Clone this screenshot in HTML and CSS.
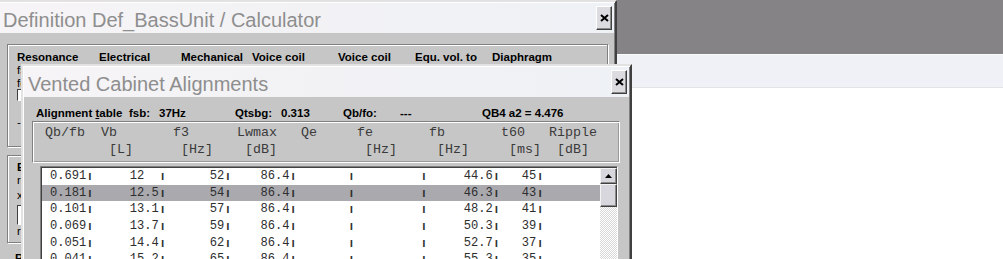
FILE: index.html
```html
<!DOCTYPE html>
<html lang="en">
<head>
  <meta charset="UTF-8">
  <meta name="viewport" content="width=device-width, initial-scale=1.0">
  <title>Vented Cabinet Alignments</title>
  <link rel="stylesheet" href="styles.css">
</head>
<body>
  <!-- whatever lies behind the dialogs -->
  <div class="desktop-bar"></div>
  <div class="other-title"></div>

  <div class="window calc-window">
    <div class="titlebar">
      <span class="title">Definition Def_BassUnit / Calculator</span>
      <button class="close-btn"><svg width="9" height="8" viewBox="0 0 9 8"><path d="M1 1L8 7M8 1L1 7" stroke="#000" stroke-width="2"/></svg></button>
    </div>
    <div class="calc-body">
      <div class="group params">
        <div class="tabs">
          <span>Resonance</span><span>Electrical</span><span>Mechanical</span><span>Voice coil</span><span>Voice coil</span><span>Equ. vol. to</span><span>Diaphragm</span>
        </div>
        <div class="lbl">fs [Hz]</div>
        <div class="lbl lbl-tight">fc [Hz]</div>
        <div class="edit"></div>
        <div class="lbl dash">-</div>
      </div>
      <div class="group extras">
        <div class="lbl strong">Extra</div>
        <div class="lbl">re [Ohm]</div>
        <div class="lbl lbl-gap">xmax [mm]</div>
        <div class="edit tall"></div>
        <div class="lbl">rms</div>
      </div>
      <div class="section-title">Result</div>
    </div>
  </div>

  <div class="window align-window">
    <div class="titlebar">
      <span class="title">Vented Cabinet Alignments</span>
      <button class="close-btn"><svg width="9" height="8" viewBox="0 0 9 8"><path d="M1 1L8 7M8 1L1 7" stroke="#000" stroke-width="2"/></svg></button>
    </div>
    <div class="align-body">
      <div class="info">
        <span>Alignment <u>t</u>able</span><span>fsb:</span><span>37Hz</span><span>Qtsbg:</span><span>0.313</span><span>Qb/fo:</span><span>---</span><span>QB4 a2 = 4.476</span>
      </div>
      <pre class="head">Qb/fb  Vb       f3      Lwmax   Qe     fe       fb       t60   Ripple
        [L]      [Hz]    [dB]           [Hz]     [Hz]     [ms]  [dB]</pre>
      <div class="list">
        <div class="rows">
          <div class="row">0.691<i>|</i>     12  <i>|</i>      52<i>|</i>    86.4<i>|</i>       <i>|</i>         <i>|</i>     44.6<i>|</i>   45<i>|</i></div>
          <div class="row selected">0.181<i>|</i>     12.5<i>|</i>      54<i>|</i>    86.4<i>|</i>       <i>|</i>         <i>|</i>     46.3<i>|</i>   43<i>|</i></div>
          <div class="row">0.101<i>|</i>     13.1<i>|</i>      57<i>|</i>    86.4<i>|</i>       <i>|</i>         <i>|</i>     48.2<i>|</i>   41<i>|</i></div>
          <div class="row">0.069<i>|</i>     13.7<i>|</i>      59<i>|</i>    86.4<i>|</i>       <i>|</i>         <i>|</i>     50.3<i>|</i>   39<i>|</i></div>
          <div class="row">0.051<i>|</i>     14.4<i>|</i>      62<i>|</i>    86.4<i>|</i>       <i>|</i>         <i>|</i>     52.7<i>|</i>   37<i>|</i></div>
          <div class="row">0.041<i>|</i>     15.2<i>|</i>      65<i>|</i>    86.4<i>|</i>       <i>|</i>         <i>|</i>     55.3<i>|</i>   35<i>|</i></div>
        </div>
        <div class="scrollbar">
          <div class="sb-btn"><svg width="7" height="4" viewBox="0 0 7 4"><path d="M3.5 0L7 4H0z" fill="#000"/></svg></div>
          <div class="sb-thumb"></div>
          <div class="sb-track"></div>
        </div>
      </div>
    </div>
  </div>
</body>
</html>
```

FILE: styles.css
```css
* {
  box-sizing: border-box;
}
html, body {
  margin: 0;
}
body {
  position: relative;
  width: 1003px;
  height: 259px;
  overflow: hidden;
  background: #fff;
  font-family: "Liberation Sans", Arial, sans-serif;
}

/* background behind the dialogs */
.desktop-bar {
  height: 55px;
  background: #858385;
  border-bottom: 1px solid #fbfbfb;
}
.other-title {
  height: 33px;
  background: linear-gradient(90deg, #f3f1f4 0%, #f6f2f6 15%, #eef1f6 45%, #eff1f6 100%);
  border-bottom: 1px solid #e3e3e6;
}

/* dialog frame */
.window {
  position: absolute;
  padding: 1px;
  background: #c6c6c6;
  border: 2px solid;
  border-color: #e2e2e2 #404040 #404040 #e2e2e2;
  box-shadow: inset 1px 1px #fff, inset -1px -1px #808080;
}
.calc-window {
  left: -4px;
  top: 0;
  width: 621px;
  height: 275px;
}
.align-window {
  left: 21px;
  top: 64px;
  width: 611px;
  height: 210px;
}
.titlebar {
  height: 30px;
  display: flex;
  align-items: center;
  justify-content: space-between;
  padding: 0 2px 0 4px;
  background: linear-gradient(90deg, #f6f4f6, #f2f2f5 50%, #eef1f5);
}
.title {
  padding-top: 4px;
  font-size: 20px;
  line-height: 22px;
  color: #8e8e8e;
  white-space: nowrap;
}
.close-btn {
  width: 16px;
  height: 24px;
  padding: 0;
  display: flex;
  align-items: center;
  justify-content: center;
  background: #dcdbe0;
  border: 1px solid;
  border-color: #fff #404040 #404040 #fff;
  box-shadow: inset -1px -1px #8a8a8a;
}

/* back dialog */
.group {
  border: 1px solid #808080;
  box-shadow: inset 1px 1px #fff, 1px 1px #fff;
}
.params {
  margin: 11px 6px 0 8px;
  height: 103px;
  padding: 5px 0 0 9px;
}
.extras {
  margin: 8px 6px 0 8px;
  height: 88px;
  padding: 5px 0 0 9px;
}
.tabs {
  display: grid;
  grid-template-columns: 82px 82px 71px 86px 77px 77px auto;
  font-size: 11.5px;
  font-weight: bold;
  line-height: 14px;
  white-space: nowrap;
}
.lbl {
  font-size: 11.5px;
  line-height: 13px;
  white-space: nowrap;
}
.lbl-tight {
  line-height: 12px;
}
.lbl-gap {
  margin-top: 2px;
}
.strong {
  font-weight: bold;
}
.dash {
  margin-top: 15px;
}
.edit {
  width: 120px;
  height: 12px;
  background: #fff;
  border: 1px solid;
  border-color: #404040 #fff #fff #404040;
}
.edit.tall {
  height: 20px;
  margin-top: 3px;
}
.section-title {
  margin-top: 8px;
  padding-left: 16px;
  font-size: 11.5px;
  font-weight: bold;
  line-height: 14px;
}

/* alignment dialog */
.align-body {
  padding-top: 9px;
}
.info {
  display: grid;
  grid-template-columns: 93px 30px 76px 46px 62px 57px 82px auto;
  margin-left: 12px;
  font-size: 11.5px;
  font-weight: bold;
  line-height: 14px;
  white-space: nowrap;
}
.head {
  margin: 1px 9px 0 8px;
  height: 42px;
  padding: 3px 0 0 12px;
  border: 1px solid;
  border-color: #808080 #fff #fff #808080;
  box-shadow: inset 1px 1px #fff, inset -1px -1px #9a9a9a;
  font-family: "Liberation Mono", "Courier New", monospace;
  font-size: 13.33px;
  line-height: 16.5px;
  color: #3a3a3a;
}
.list {
  display: flex;
  margin: 3px 11px 0 16px;
  height: 110px;
  padding: 1px 0 0 1px;
  background: #fff;
  border: 1px solid;
  border-color: #808080 #fff #fff #808080;
  box-shadow: inset 1px 1px #404040;
}
.rows {
  flex: 1;
}
.row {
  height: 16.67px;
  padding: 1px 0 0 8px;
  font-family: "Liberation Mono", "Courier New", monospace;
  font-size: 12.1px;
  line-height: 15.67px;
  white-space: pre;
  color: #2e2e2e;
}
/* the column bars only reach digit height */
.row i {
  display: inline-block;
  font-style: normal;
  font-weight: bold;
  transform: scaleY(.62);
  transform-origin: 50% 7.5px;
}
.row.selected {
  background: #a9a9ae;
}
.scrollbar {
  width: 17px;
  display: flex;
  flex-direction: column;
}
.sb-btn,
.sb-thumb {
  background: #d8d7dd;
  border: 1px solid;
  border-color: #f4f4f4 #404040 #404040 #f4f4f4;
  box-shadow: inset -1px -1px #8a8a8a;
}
.sb-btn {
  height: 16px;
  display: flex;
  align-items: center;
  justify-content: center;
}
.sb-thumb {
  height: 23px;
}
.sb-track {
  flex: 1;
  background: repeating-conic-gradient(#fff 0 25%, #d8d8d8 0 50%) 0 0 / 2px 2px;
}
```
